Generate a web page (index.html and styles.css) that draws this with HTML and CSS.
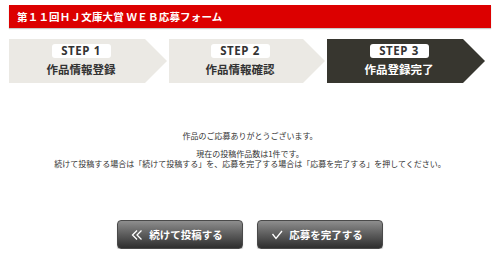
FILE: index.html
```html
<!DOCTYPE html>
<html lang="ja">
<head>
<meta charset="utf-8">
<title>WEB応募フォーム</title>
<link rel="stylesheet" href="styles.css">
</head>
<body>
<div class="page">
  <header class="title-bar">第１１回ＨＪ文庫大賞 ＷＥＢ応募フォーム</header>
  <ol class="steps">
    <li class="step">
      <span class="step-label">STEP 1</span>
      <span class="step-name">作品情報登録</span>
    </li>
    <li class="step">
      <span class="step-label">STEP 2</span>
      <span class="step-name">作品情報確認</span>
    </li>
    <li class="step step-current">
      <span class="step-label">STEP 3</span>
      <span class="step-name">作品登録完了</span>
    </li>
  </ol>
  <div class="message">
    <p class="msg-thanks">作品のご応募ありがとうございます。</p>
    <p class="msg-info">現在の投稿作品数は1件です。<br>続けて投稿する場合は「続けて投稿する」を、応募を完了する場合は「応募を完了する」を押してください。</p>
  </div>
  <div class="actions">
    <button class="btn" type="button">
      <svg class="btn-icon" viewBox="0 0 12 12" width="12" height="12"><polyline points="6,1.5 1.5,6 6,10.5" /><polyline points="10.5,1.5 6,6 10.5,10.5" /></svg>
      <span>続けて投稿する</span>
    </button>
    <button class="btn" type="button">
      <svg class="btn-icon" viewBox="0 0 12 12" width="12" height="12"><polyline points="1.5,5 5,9.5 11,2" /></svg>
      <span>応募を完了する</span>
    </button>
  </div>
</div>
</body>
</html>
```
FILE: styles.css
```css
html, body {
  margin: 0;
  padding: 0;
  background: #ffffff;
}

body {
  font-family: "Noto Sans CJK JP", "Noto Sans", sans-serif;
  color: #333333;
}

.page {
  padding: 5px 9px 0 9px;
  width: 482px;
}

.title-bar {
  height: 23px;
  background: #dc0000;
  color: #ffffff;
  font-weight: bold;
  font-size: 10.5px;
  line-height: 23px;
  padding-left: 8px;
  box-shadow: 0 1px 1px #c8c8c8;
  letter-spacing: 0.2px;
}

.steps {
  list-style: none;
  margin: 11px 0 0 0;
  padding: 0;
  display: flex;
  gap: 2px;
}

.step {
  width: 158px;
  height: 44px;
  background: #ebe9e4;
  clip-path: polygon(0 0, 136px 0, 158px 22px, 136px 44px, 0 44px);
  display: flex;
  flex-direction: column;
  align-items: center;
  box-sizing: border-box;
  padding: 5px 14px 0 0;
}

.step:nth-child(2) {
  width: 156px;
  clip-path: polygon(0 0, 134px 0, 156px 22px, 134px 44px, 0 44px);
}

.step-label {
  display: block;
  width: 59px;
  height: 14px;
  background: #ffffff;
  border-radius: 3px;
  color: #333333;
  font-family: "Noto Sans", "Open Sans", sans-serif;
  font-weight: bold;
  font-size: 11.5px;
  line-height: 14px;
  text-align: center;
  letter-spacing: 0.6px;
}

.step-name {
  display: block;
  margin-top: 4px;
  font-weight: bold;
  font-size: 11.5px;
  line-height: 14px;
  color: #333333;
}

.step-current {
  background: #37362f;
}

.step-current .step-name {
  color: #ffffff;
}

.message {
  margin-top: 48px;
  text-align: center;
  font-size: 8px;
  line-height: 10px;
  color: #333333;
}

.message p {
  margin: 0;
}

.msg-info {
  margin-top: 8px !important;
}

.actions {
  margin-top: 51px;
  display: flex;
  justify-content: center;
  gap: 14px;
}

.btn {
  width: 126px;
  height: 29px;
  border: 1px solid #4a4a4a;
  border-radius: 4px;
  background: linear-gradient(to bottom, #8e8e8e 0%, #5c5c5c 50%, #2e2e2e 100%);
  box-shadow: 0 1px 1px rgba(0, 0, 0, 0.25);
  color: #ffffff;
  font-family: "Noto Sans CJK JP", sans-serif;
  font-weight: bold;
  font-size: 10.5px;
  display: flex;
  align-items: center;
  justify-content: center;
  gap: 6px;
  padding: 0 6px 0 0;
  box-sizing: border-box;
  cursor: pointer;
}

.btn-icon {
  fill: none;
  stroke: #ffffff;
  stroke-width: 1.3;
}
```
